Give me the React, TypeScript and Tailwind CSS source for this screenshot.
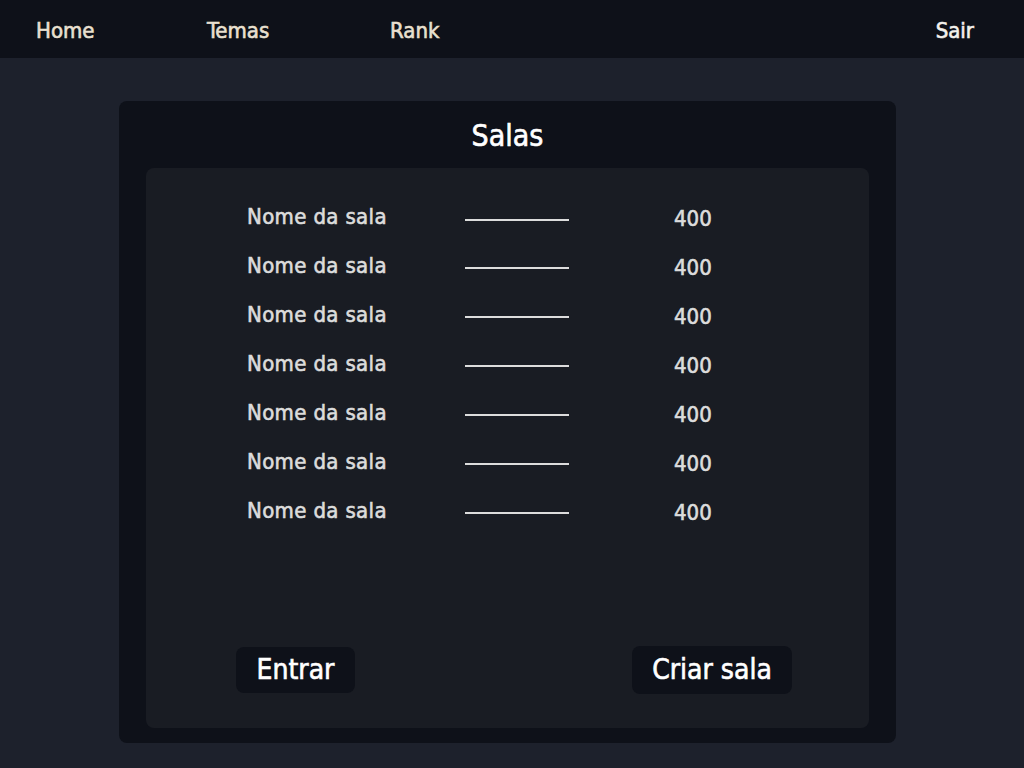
import React from "react";

const rooms = Array.from({ length: 7 }, () => ({ name: "Nome da sala", points: 400 }));

export default function App() {
  return (
    <div
      className="min-h-[768px] bg-[#1d212c] flex flex-col [-webkit-text-stroke:0.6px_currentColor]"
      style={{ fontFamily: '"DejaVu Sans Condensed", "DejaVu Sans", sans-serif' }}
    >
      {/* Top nav */}
      <nav className="h-[58px] bg-[#0e1119] flex items-center pl-[36px] pr-[50px] pt-[2px] text-[22px]">
        <a className="text-[#e9e0d0] w-[171px]">Home</a>
        <a className="text-[#e9e0d0] w-[183px]">Temas</a>
        <a className="text-[#e9e0d0]">Rank</a>
        <a className="ml-auto text-[#f4f1ec]">Sair</a>
      </nav>

      {/* Rooms card */}
      <div className="flex pl-[119px] pt-[43px]">
        <div className="w-[777px] h-[642px] bg-[#0e1119] rounded-lg flex flex-col px-[27px] pb-[15px]">
          <h1 className="h-[67px] flex items-center justify-center text-[30px] text-white pt-[2px]">
            Salas
          </h1>
          <div className="flex-1 bg-[#191c23] rounded-lg flex flex-col">
            <div className="flex flex-col gap-[26px] pl-[101px] pt-[37px]">
              {rooms.map((r, i) => (
                <div key={i} className="flex items-center h-[23px] text-[22px] text-[#dcdcdc]">
                  <span className="w-[218px] tracking-[0.35px]">{r.name}</span>
                  <span
                    className={
                      i === 0
                        ? "w-[104px] h-[2px] bg-[#dcdcdc] mt-[7px]"
                        : "w-[104px] h-[2px] bg-[#dcdcdc] mt-[4px]"
                    }
                  />
                  <span className="ml-[105px] mt-[3px]">{r.points}</span>
                </div>
              ))}
            </div>
            <div className="mt-auto flex justify-between items-center pl-[90px] pr-[77px] pb-[34px]">
              <button className="h-[46px] w-[119px] rounded-lg bg-[#0e1119] text-white text-[28px]">
                Entrar
              </button>
              <button className="h-[48px] w-[160px] rounded-lg bg-[#0e1119] text-white text-[28px]">
                Criar sala
              </button>
            </div>
          </div>
        </div>
      </div>
    </div>
  );
}
